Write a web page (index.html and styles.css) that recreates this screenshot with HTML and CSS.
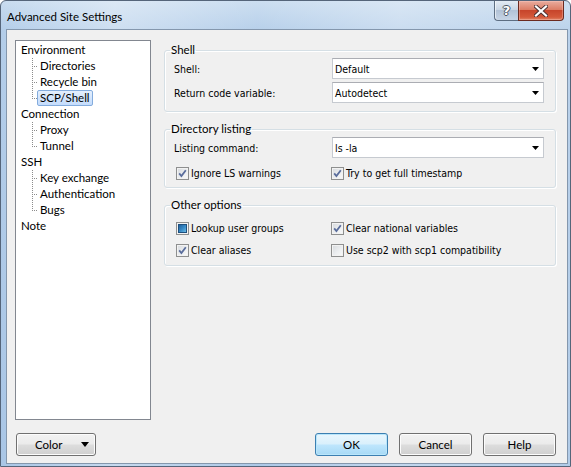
FILE: index.html
```html
<!DOCTYPE html>
<html>
<head>
<meta charset="utf-8">
<link rel="stylesheet" href="styles.css">
</head>
<body>
<div class="window">
  <div class="titlebar">
    <span class="title">Advanced Site Settings</span>
    <div class="caption-btns">
      <div class="cbtn help"><span class="q">?</span></div>
      <div class="cbtn close">
        <svg width="14" height="12" viewBox="0 0 14 12"><path d="M2 1.5 L12 10.5 M12 1.5 L2 10.5" stroke="#4a3030" stroke-width="4" stroke-linecap="square"/><path d="M2 1.5 L12 10.5 M12 1.5 L2 10.5" stroke="#ffffff" stroke-width="2.2" stroke-linecap="square"/></svg>
      </div>
    </div>
  </div>
  <div class="client">
    <div class="main">
      <div class="tree">
        <div class="node"><span class="lbl">Environment</span></div>
        <div class="children">
          <div class="leaf"><span class="vline"></span><span class="hline"></span><span class="lbl">Directories</span></div>
          <div class="leaf"><span class="vline"></span><span class="hline"></span><span class="lbl">Recycle bin</span></div>
          <div class="leaf last"><span class="vline"></span><span class="hline"></span><span class="lbl sel">SCP/Shell</span></div>
        </div>
        <div class="node"><span class="lbl">Connection</span></div>
        <div class="children">
          <div class="leaf"><span class="vline"></span><span class="hline"></span><span class="lbl">Proxy</span></div>
          <div class="leaf last"><span class="vline"></span><span class="hline"></span><span class="lbl">Tunnel</span></div>
        </div>
        <div class="node"><span class="lbl">SSH</span></div>
        <div class="children">
          <div class="leaf"><span class="vline"></span><span class="hline"></span><span class="lbl">Key exchange</span></div>
          <div class="leaf"><span class="vline"></span><span class="hline"></span><span class="lbl">Authentication</span></div>
          <div class="leaf last"><span class="vline"></span><span class="hline"></span><span class="lbl">Bugs</span></div>
        </div>
        <div class="node"><span class="lbl">Note</span></div>
      </div>
      <div class="panel">
        <fieldset class="group g1">
          <legend>Shell</legend>
          <div class="grid">
            <label class="flabel">Shell:</label>
            <div class="combo"><span>Default</span><svg class="arrow" width="7" height="4" viewBox="0 0 7 4"><path d="M0 0 H7 L3.5 4 Z" fill="#000"/></svg></div>
            <label class="flabel">Return code variable:</label>
            <div class="combo"><span>Autodetect</span><svg class="arrow" width="7" height="4" viewBox="0 0 7 4"><path d="M0 0 H7 L3.5 4 Z" fill="#000"/></svg></div>
          </div>
        </fieldset>
        <fieldset class="group g2">
          <legend>Directory listing</legend>
          <div class="grid">
            <label class="flabel">Listing command:</label>
            <div class="combo"><span>ls -la</span><svg class="arrow" width="7" height="4" viewBox="0 0 7 4"><path d="M0 0 H7 L3.5 4 Z" fill="#000"/></svg></div>
          </div>
          <div class="cbrow r1">
            <div class="cb"><span class="box checked"><svg width="11" height="11" viewBox="0 0 11 11"><path d="M2.2 5.4 L4.4 8 L8.8 2.2" fill="none" stroke="#5a6d9c" stroke-width="1.8"/></svg></span>Ignore LS warnings</div>
            <div class="cb"><span class="box checked"><svg width="11" height="11" viewBox="0 0 11 11"><path d="M2.2 5.4 L4.4 8 L8.8 2.2" fill="none" stroke="#5a6d9c" stroke-width="1.8"/></svg></span>Try to get full timestamp</div>
          </div>
        </fieldset>
        <fieldset class="group g3">
          <legend>Other options</legend>
          <div class="cbrow r1">
            <div class="cb"><span class="box"><span class="indet"></span></span>Lookup user groups</div>
            <div class="cb"><span class="box checked"><svg width="11" height="11" viewBox="0 0 11 11"><path d="M2.2 5.4 L4.4 8 L8.8 2.2" fill="none" stroke="#5a6d9c" stroke-width="1.8"/></svg></span>Clear national variables</div>
          </div>
          <div class="cbrow r2">
            <div class="cb"><span class="box checked"><svg width="11" height="11" viewBox="0 0 11 11"><path d="M2.2 5.4 L4.4 8 L8.8 2.2" fill="none" stroke="#5a6d9c" stroke-width="1.8"/></svg></span>Clear aliases</div>
            <div class="cb"><span class="box"></span>Use scp2 with scp1 compatibility</div>
          </div>
        </fieldset>
      </div>
    </div>
    <div class="footer">
      <button class="btn color"><span>Color</span><svg width="8" height="5" viewBox="0 0 8 5"><path d="M0 0 H8 L4 5 Z" fill="#000"/></svg></button>
      <div class="spacer"></div>
      <button class="btn default">OK</button>
      <button class="btn">Cancel</button>
      <button class="btn">Help</button>
    </div>
  </div>
</div>
</body>
</html>
```
FILE: styles.css
```css
* { box-sizing: border-box; }
html, body { margin: 0; padding: 0; }
body {
  width: 571px;
  height: 467px;
  overflow: hidden;
  background: #ffffff;
  font-family: "DejaVu Sans Condensed", "DejaVu Sans", sans-serif;
  font-size: 10.5px;
  color: #000;
}
.window {
  width: 571px;
  height: 467px;
  border: 1px solid #55657a;
  border-radius: 6px 6px 0 0;
  padding: 0 2px 2px 5px;
  display: flex;
  flex-direction: column;
  background:
    linear-gradient(to right, rgba(255,255,255,0.0) 0%, rgba(255,255,255,0.35) 20%, rgba(255,255,255,0.05) 45%, rgba(255,255,255,0.3) 70%, rgba(255,255,255,0.1) 100%),
    linear-gradient(to bottom, #c9dcf0 0%, #b3cde9 30px, #a9c6e6 100%);
}
.titlebar {
  height: 28px;
  margin: 0 -2px 0 -5px;
  padding: 0 6px 0 6px;
  display: flex;
  justify-content: space-between;
  align-items: flex-start;
}
.title {
  font-family: Lato, "Open Sans", sans-serif;
  font-size: 11.5px;
  line-height: 14px;
  margin-top: 9px;
  color: #000;
}
.caption-btns {
  display: flex;
  height: 20px;
}
.cbtn {
  height: 20px;
  display: flex;
  align-items: center;
  justify-content: center;
  border: 1px solid #5d6e82;
  border-top: none;
}
.help {
  width: 24px;
  border-radius: 0 0 0 4px;
  border-right: none;
  background: linear-gradient(to bottom, #e3ebf4 0%, #c9d6e5 45%, #b2c2d6 50%, #c7d5e6 100%);
  box-shadow: inset 1px 0 0 rgba(255,255,255,0.6);
}
.q {
  font-family: "DejaVu Sans", sans-serif;
  font-weight: bold;
  font-size: 13px;
  line-height: 13px;
  color: #fff;
  text-shadow: 1px 0 0 #4a5563, -1px 0 0 #4a5563, 0 1px 0 #4a5563, 0 -1px 0 #4a5563;
}
.close {
  width: 46px;
  border-color: #6b2a20;
  border-radius: 0 0 4px 0;
  background: linear-gradient(to bottom, #e9ad9f 0%, #dc7e66 45%, #c7452b 50%, #d4593a 85%, #e0866a 100%);
  box-shadow: inset 0 0 0 1px rgba(255,210,200,0.35);
}
.client {
  flex: 1;
  background: #f0f0f0;
  border: 1px solid #8497ad;
  padding: 10px 11px 7px 8px;
  display: flex;
  flex-direction: column;
}
.main {
  display: flex;
  gap: 13px;
  height: 380px;
}
.tree {
  width: 136px;
  height: 380px;
  background: #fff;
  border: 1px solid #828790;
  padding-top: 1px;
  font-family: Lato, "Open Sans", sans-serif;
  font-size: 11.5px;
}
.node {
  height: 16px;
  padding-left: 2px;
}
.lbl {
  display: inline-block;
  height: 16px;
  line-height: 14px;
  padding: 0 2px;
  border: 1px solid transparent;
  white-space: nowrap;
  vertical-align: top;
}
.lbl.sel {
  border-color: #84acdd;
  border-radius: 2px;
  background: linear-gradient(to bottom, #e4effd, #c4dcfc);
}
.children { margin-left: 16px; }
.leaf {
  display: flex;
  height: 16px;
}
.vline {
  display: block;
  width: 1px;
  height: 16px;
  flex: none;
  background: repeating-linear-gradient(to bottom, #8c8c8c 0px, #8c8c8c 1px, transparent 1px, transparent 2px);
}
.leaf.last .vline { height: 9px; }
.hline {
  display: block;
  width: 4px;
  height: 1px;
  flex: none;
  margin-top: 8px;
  background: repeating-linear-gradient(to right, transparent 0px, transparent 1px, #8c8c8c 1px, #8c8c8c 2px);
}
.panel {
  width: 392px;
  padding-top: 3px;
  display: flex;
  flex-direction: column;
  gap: 10px;
}
.group {
  margin: 0;
  padding: 0 11px 0 9px;
  border: 1px solid #d5dfe5;
  border-radius: 3px;
  box-shadow: inset 1px 1px 0 #fff, 1px 1px 0 #fff;
  min-width: 0;
}
.group legend {
  margin-left: -4px;
  padding: 0 1px;
  font-family: Lato, "Open Sans", sans-serif;
  font-size: 11.5px;
  line-height: 14px;
  height: 14px;
}
.grid {
  display: grid;
  grid-template-columns: 158px 1fr;
  row-gap: 3px;
  align-items: center;
  padding-top: 1px;
}
.g1 .grid { padding-bottom: 8px; }
.flabel { white-space: nowrap; }
.combo {
  height: 21px;
  background: #fff;
  border: 1px solid #c6cad0;
  border-top-color: #abadb3;
  display: flex;
  align-items: center;
  justify-content: space-between;
  padding: 0 4px 0 2px;
}
.arrow { margin-top: 1px; }
.cbrow {
  display: grid;
  grid-template-columns: 157px 1fr;
  height: 13px;
}
.g2 .cbrow.r1 { margin-top: 9px; margin-bottom: 7px; }
.g3 .cbrow.r1 { margin-top: 10px; }
.g3 .cbrow.r2 { margin-top: 9px; margin-bottom: 8px; }
.cb {
  display: flex;
  align-items: center;
  white-space: nowrap;
  height: 13px;
  line-height: 13px;
}
.cb:first-child { margin-left: 2px; }
.box {
  width: 13px;
  height: 13px;
  flex: none;
  margin-right: 2px;
  border: 1px solid #8e8f8f;
  background: linear-gradient(135deg, #d6d9dd 0%, #eceef0 55%, #fafafa 100%);
  box-shadow: inset 0 0 0 1px #f2f2f2;
  display: flex;
  align-items: center;
  justify-content: center;
}
.indet {
  width: 9px;
  height: 9px;
  border: 1px solid #1e4f7d;
  background: linear-gradient(135deg, #1f5f9c 0%, #3688c4 50%, #6bbbe6 100%);
}
.footer {
  display: flex;
  margin-top: 13px;
  gap: 11px;
}
.spacer { flex: 1; }
.btn {
  width: 73px;
  height: 23px;
  border: 1px solid #707070;
  border-radius: 3px;
  background: linear-gradient(to bottom, #f2f2f2 0%, #ebebeb 48%, #dddddd 52%, #cfcfcf 100%);
  box-shadow: inset 0 0 0 1px #fcfcfc;
  font-family: Lato, "Open Sans", sans-serif;
  font-size: 11.5px;
  color: #000;
  padding: 0;
  margin: 0;
}
.btn.color {
  width: 80px;
  margin-left: 1px;
  display: flex;
  align-items: center;
  justify-content: space-between;
  padding: 0 6px 0 18px;
}
.btn.default {
  border-color: #3c7fb1;
  background: linear-gradient(to bottom, #eaf6fd 0%, #d9f0fc 48%, #bee6fd 52%, #a7d9f5 100%);
  box-shadow: inset 0 0 0 1px #b9e6fb;
}
```
